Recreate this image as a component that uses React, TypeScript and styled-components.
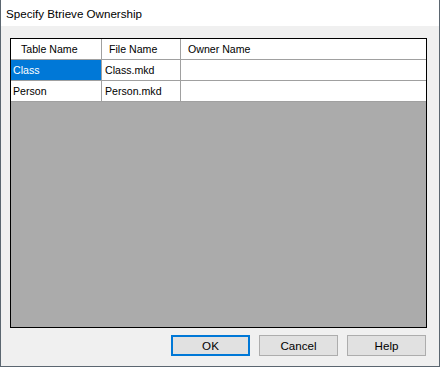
import React from 'react';
import styled, { createGlobalStyle } from 'styled-components';

const GlobalStyle = createGlobalStyle`
  html, body {
    margin: 0;
    padding: 0;
    background: #f0f0f0;
  }
`;

const Window = styled.div`
  box-sizing: border-box;
  display: flex;
  flex-direction: column;
  width: 440px;
  height: 367px;
  background: #f0f0f0;
  border: 1px solid #5b6670;
  border-top: none;
  font-family: 'Liberation Sans', Arial, sans-serif;
`;

const TitleBar = styled.div`
  height: 26px;
  display: flex;
  align-items: center;
  padding-left: 5px;
  background: #fff;
  color: #000;
  font-size: 11.6px;
`;

const Body = styled.div`
  flex: 1;
  display: flex;
  flex-direction: column;
  padding: 12px 12px 10px 9px;
  min-height: 0;
`;

const Grid = styled.div`
  flex: 1;
  border: 1px solid #000;
  background: #ababab;
  font-size: 10.6px;
  color: #000;
`;

const Row = styled.div`
  display: flex;
  height: 21px;
  background: #fff;
`;

const Cell = styled.div<{ $w?: number; $pad?: number; $selected?: boolean }>`
  box-sizing: border-box;
  display: flex;
  align-items: center;
  ${p => (p.$w ? `width: ${p.$w}px;` : 'flex: 1;')}
  padding-left: ${p => p.$pad ?? 3}px;
  border-right: ${p => (p.$w ? '1px solid #a0a0a0' : 'none')};
  border-bottom: 1px solid #a0a0a0;
  background: ${p => (p.$selected ? '#0078d7' : '#fff')};
  color: ${p => (p.$selected ? '#fff' : '#000')};
  white-space: nowrap;
`;

const ButtonRow = styled.div`
  display: flex;
  justify-content: flex-end;
  gap: 9px;
  margin-top: 7px;
  margin-right: 1px;
`;

const Button = styled.button<{ $default?: boolean }>`
  box-sizing: border-box;
  width: 79px;
  height: 21px;
  padding: 0;
  background: #e1e1e1;
  border: ${p => (p.$default ? '2px solid #0078d7' : '1px solid #adadad')};
  font-family: 'Liberation Sans', Arial, sans-serif;
  font-size: 11.6px;
  color: #000;
`;

const columns = [
  { title: 'Table Name', width: 91, headPad: 10 },
  { title: 'File Name', width: 79, headPad: 7 },
  { title: 'Owner Name', width: 0, headPad: 7 },
];

const rows = [
  ['Class', 'Class.mkd', ''],
  ['Person', 'Person.mkd', ''],
];

const App = () => (
  <>
    <GlobalStyle />
    <Window>
      <TitleBar>Specify Btrieve Ownership</TitleBar>
      <Body>
        <Grid>
          <Row>
            {columns.map(c => (
              <Cell key={c.title} $w={c.width || undefined} $pad={c.headPad}>
                {c.title}
              </Cell>
            ))}
          </Row>
          {rows.map((r, i) => (
            <Row key={r[0]}>
              {r.map((v, j) => (
                <Cell
                  key={j}
                  $w={columns[j].width || undefined}
                  $pad={j === 0 ? 2 : 3}
                  $selected={i === 0 && j === 0}
                >
                  {v}
                </Cell>
              ))}
            </Row>
          ))}
        </Grid>
        <ButtonRow>
          <Button $default>OK</Button>
          <Button>Cancel</Button>
          <Button>Help</Button>
        </ButtonRow>
      </Body>
    </Window>
  </>
);

export default App;
